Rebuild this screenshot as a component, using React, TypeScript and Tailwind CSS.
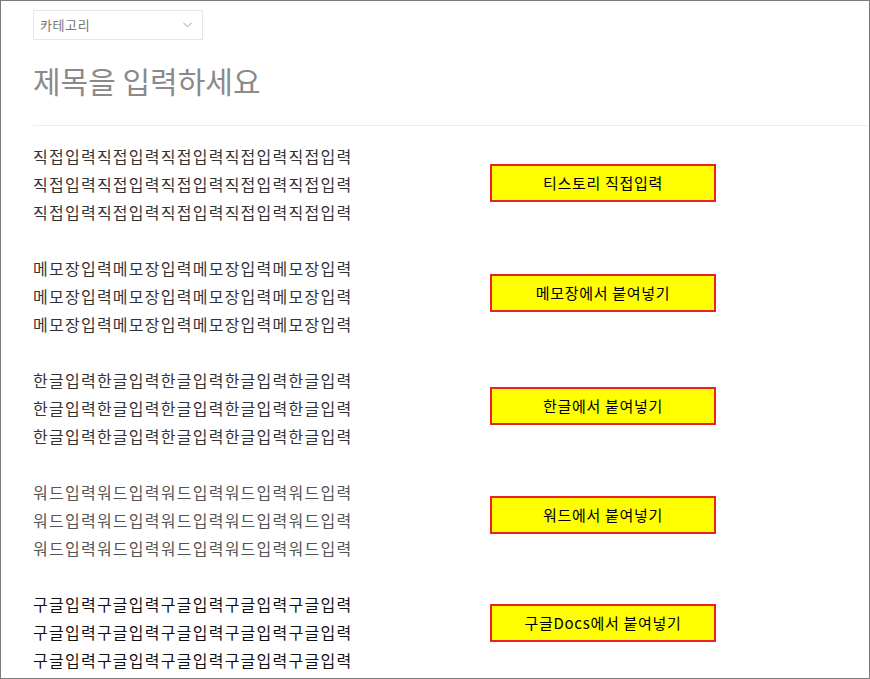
import React from "react";

const groups = [
  { text: "직접입력", button: "티스토리 직접입력", color: "text-[#333333]", mt: "mt-[22px]" },
  { text: "메모장입력", button: "메모장에서 붙여넣기", color: "text-[#333333]", mt: "mt-[20px]" },
  { text: "한글입력", button: "한글에서 붙여넣기", color: "text-[#333333]", mt: "mt-[21px]" },
  { text: "워드입력", button: "워드에서 붙여넣기", color: "text-[#555555]", mt: "mt-[18px]" },
  { text: "구글입력", button: "구글Docs에서 붙여넣기", color: "text-[#111111]", mt: "mt-[14px]" },
];

function Group({ text, button, color, mt }: { text: string; button: string; color: string; mt: string }) {
  const line = text.repeat(20 / text.length);
  return (
    <div className="flex h-[84px]">
      <div className={`w-[457px] text-[16px] leading-[28px] tracking-[1.25px] ${color}`}>
        <p>{line}</p>
        <p>{line}</p>
        <p>{line}</p>
      </div>
      <div
        className={`${mt} flex h-[38px] w-[226px] items-center justify-center border-2 border-[#ec2027] bg-[#ffff00] text-[15px] tracking-[0.7px] text-black`}
      >
        {button}
      </div>
    </div>
  );
}

export default function App() {
  return (
    <div
      className="h-[679px] w-[870px] overflow-hidden border border-[#7b7b7b] bg-white"
      style={{ fontFamily: '"Noto Sans CJK KR", "Noto Sans", sans-serif' }}
    >
      <div className="pl-[32px]">
        <div className="mt-[9px] flex h-[30px] w-[170px] items-center justify-between border border-[#e6e6e6] pl-[6px] pr-[10px] text-[13px] tracking-[0.6px] text-[#777777]">
          <span>카테고리</span>
          <svg width="9" height="6" viewBox="0 0 9 6" fill="none">
            <path d="M0.5 0.8 L4.5 4.8 L8.5 0.8" stroke="#999999" strokeWidth="1" />
          </svg>
        </div>
        <h1 className="mt-[20px] h-[40px] text-[30px] leading-[40px] text-[#8a8a8a]">제목을 입력하세요</h1>
        <div className="mt-[25px] h-px bg-[#eeeeee]" />
        <div className="mt-[16px] flex flex-col gap-[28px]">
          {groups.map((g) => (
            <Group key={g.text} {...g} />
          ))}
        </div>
      </div>
    </div>
  );
}
